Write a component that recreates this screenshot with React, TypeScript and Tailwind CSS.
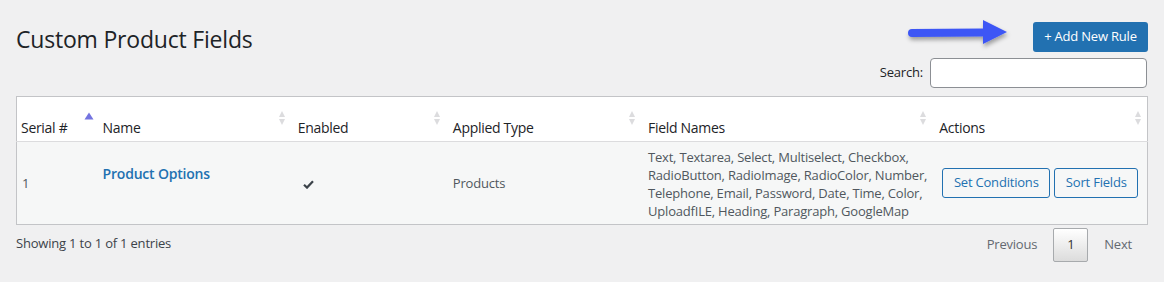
import React from "react";

const SortBoth = () => (
  <svg width="8" height="16" viewBox="0 0 8 16" className="block">
    <path d="M1 7 L4 1 L7 7 Z" fill="#dcdcde" />
    <path d="M1 9 L4 15 L7 9 Z" fill="#dcdcde" />
  </svg>
);

const SortAsc = () => (
  <svg width="10" height="8" viewBox="0 0 10 8" className="block">
    <path d="M0.5 7.5 L5 0.5 L9.5 7.5 Z" fill="#7474e0" />
  </svg>
);

const Arrow = () => (
  <svg width="110" height="34" viewBox="0 0 110 34" className="block">
    <defs>
      <filter id="sh" x="-20%" y="-50%" width="140%" height="200%">
        <feDropShadow dx="1" dy="3" stdDeviation="2" floodColor="#000" floodOpacity="0.35" />
      </filter>
    </defs>
    <g filter="url(#sh)">
      <path d="M9 10 L80 9.5 L80 1 L104 13 L80 25 L80 17.5 L9 18 A4 4 0 0 1 9 10 Z" fill="#3d57f5" />
    </g>
  </svg>
);

const headers = [
  { label: "Serial #", w: 80, pl: 4, icon: "asc" },
  { label: "Name", w: 194, pl: 6, icon: "both" },
  { label: "Enabled", w: 155, pl: 7, icon: "both" },
  { label: "Applied Type", w: 195, pl: 7, icon: "both" },
  { label: "Field Names", w: 291, pl: 7, icon: "both" },
  { label: "Actions", w: 215, pl: 7, icon: "both" },
];

export default function App() {
  return (
    <div
      className="w-[1164px] h-[282px] bg-[#f0f0f1] text-[#3c434a] px-4 overflow-hidden"
      style={{ fontFamily: '"Open Sans", "Noto Sans", sans-serif' }}
    >
      <div className="flex items-start justify-between pt-[20px]">
        <h1 className="text-[23px] leading-[30px] pt-[4px] text-[#1d2327] tracking-[-0.2px]">Custom Product Fields</h1>
        <div className="flex items-center">
          <div className="mr-[20px] mt-[-1px]">
            <Arrow />
          </div>
          <button className="h-[30px] w-[115px] rounded-[3px] bg-[#2271b1] text-white text-[13px] tracking-[-0.2px]">
            + Add New Rule
          </button>
        </div>
      </div>
      <div className="flex items-center justify-end mt-[4px] pr-[1px]">
        <span className="text-[13px] text-[#1d2327] mr-[7px] tracking-[-0.2px]">Search:</span>
        <div className="w-[217px] h-[30px] bg-white border border-[#8c8f94] rounded-[4px]" />
      </div>
      <table className="mt-[8px] border border-[#c3c4c7] border-collapse table-fixed w-[1132px]">
        <thead>
          <tr className="bg-white h-[45px] border-b border-[#dcdcde]">
            {headers.map((h) => (
              <th
                key={h.label}
                style={{ width: h.w, paddingLeft: h.pl }}
                className="relative text-left font-normal align-bottom pb-[3px] text-[14px] text-[#1d2327] tracking-[-0.3px] whitespace-nowrap"
              >
                {h.label}
                {h.icon === "asc" ? (
                  <span className="absolute right-[3px] top-[15px]">
                    <SortAsc />
                  </span>
                ) : (
                  <span className="absolute right-[5px] top-[13px]">
                    <SortBoth />
                  </span>
                )}
              </th>
            ))}
          </tr>
        </thead>
        <tbody>
          <tr className="bg-[#f6f7f7] h-[83px] text-[13px] text-[#50575e] tracking-[-0.2px]">
            <td className="pl-[5px] align-middle pt-[2px] text-[#50575e]">1</td>
            <td className="pl-[6px] align-middle pb-[18px]">
              <span className="font-semibold text-[14px] text-[#2271b1]">Product Options</span>
            </td>
            <td className="pl-[12px] align-middle pt-[2px]">
              <svg width="11" height="9" viewBox="0 0 11 9" className="block">
                <path d="M1 4.8 L4 7.6 L10 1.2" stroke="#3c434a" strokeWidth="2.2" fill="none" />
              </svg>
            </td>
            <td className="pl-[7px] align-middle pt-[2px]">Products</td>
            <td className="pl-[7px] align-middle leading-[18px] pt-[1px]">
              Text, Textarea, Select, Multiselect, Checkbox,
              <br />
              RadioButton, RadioImage, RadioColor, Number,
              <br />
              Telephone, Email, Password, Date, Time, Color,
              <br />
              UploadfILE, Heading, Paragraph, GoogleMap
            </td>
            <td className="pl-[10px] align-middle">
              <div className="flex gap-[4px]">
                <button className="h-[30px] w-[108px] border border-[#2271b1] rounded-[3px] text-[#2271b1] text-[13px] tracking-[-0.2px]">
                  Set Conditions
                </button>
                <button className="h-[30px] w-[84px] border border-[#2271b1] rounded-[3px] text-[#2271b1] text-[13px] tracking-[-0.2px]">
                  Sort Fields
                </button>
              </div>
            </td>
          </tr>
        </tbody>
      </table>
      <div className="flex items-center justify-between mt-[3px]">
        <span className="text-[13px] text-[#3c434a] tracking-[-0.2px] pb-[2px]">Showing 1 to 1 of 1 entries</span>
        <div className="flex items-center text-[13px] tracking-[-0.2px] mr-[16px]">
          <span className="text-[#646970] mr-[16px]">Previous</span>
          <span className="w-[35px] h-[34px] flex items-center justify-center border border-[#a7aaad] rounded-[2px] bg-gradient-to-b from-white to-[#dcdcdc] text-[#333]">
            1
          </span>
          <span className="text-[#646970] ml-[16px]">Next</span>
        </div>
      </div>
    </div>
  );
}
